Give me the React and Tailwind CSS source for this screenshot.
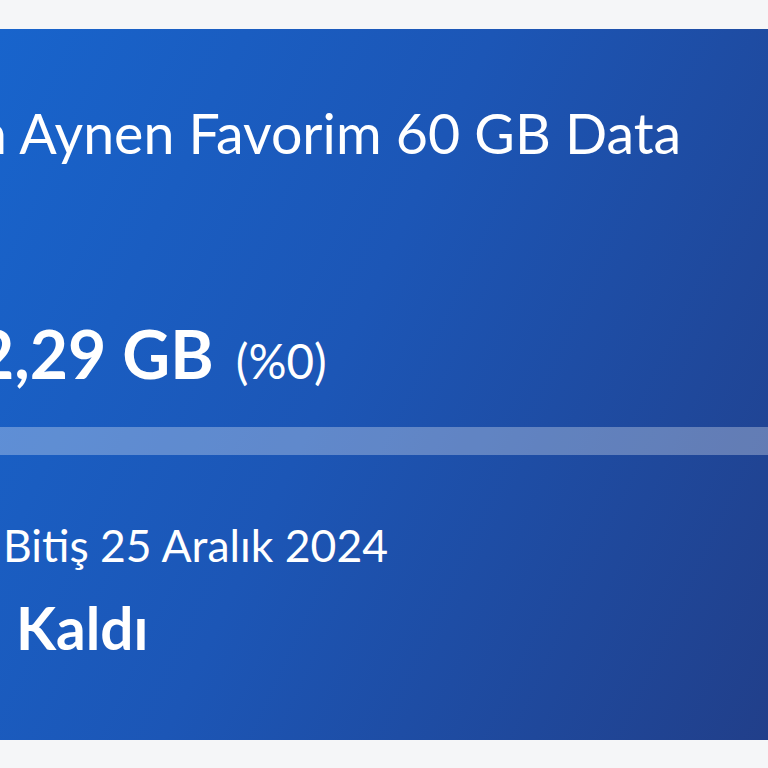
import React from "react";

const PackageCard = () => {
  return (
    <div className="h-[711px] overflow-hidden bg-[linear-gradient(115deg,#1864cc_0%,#1c56b6_45%,#213f8a_100%)] text-white">
      <div className="pt-[76px]">
        <p className="-ml-[24px] whitespace-nowrap text-[55.5px] leading-none font-normal">
          n Aynen Favorim 60 GB Data
        </p>

        <div className="mt-[160px] -ml-[24px] flex items-baseline gap-[22px] whitespace-nowrap leading-none">
          <span className="text-[66px] font-bold">2,29 GB</span>
          <span className="text-[47.5px] font-normal">(%0)</span>
        </div>

        <div className="mt-[40px] h-[28px] w-full bg-white/30" />

        <p className="mt-[68px] ml-[3px] whitespace-nowrap text-[44.5px] leading-none">
          Bitiş 25 Aralık 2024
        </p>
        <p className="mt-[31px] ml-[16px] whitespace-nowrap text-[58.5px] leading-none font-bold">
          Kaldı
        </p>
      </div>
    </div>
  );
};

export default function App() {
  return (
    <div
      className="h-[768px] overflow-hidden bg-[#f5f6f8] pt-[29px]"
      style={{ fontFamily: "Lato, 'Noto Sans', sans-serif" }}
    >
      <PackageCard />
    </div>
  );
}
